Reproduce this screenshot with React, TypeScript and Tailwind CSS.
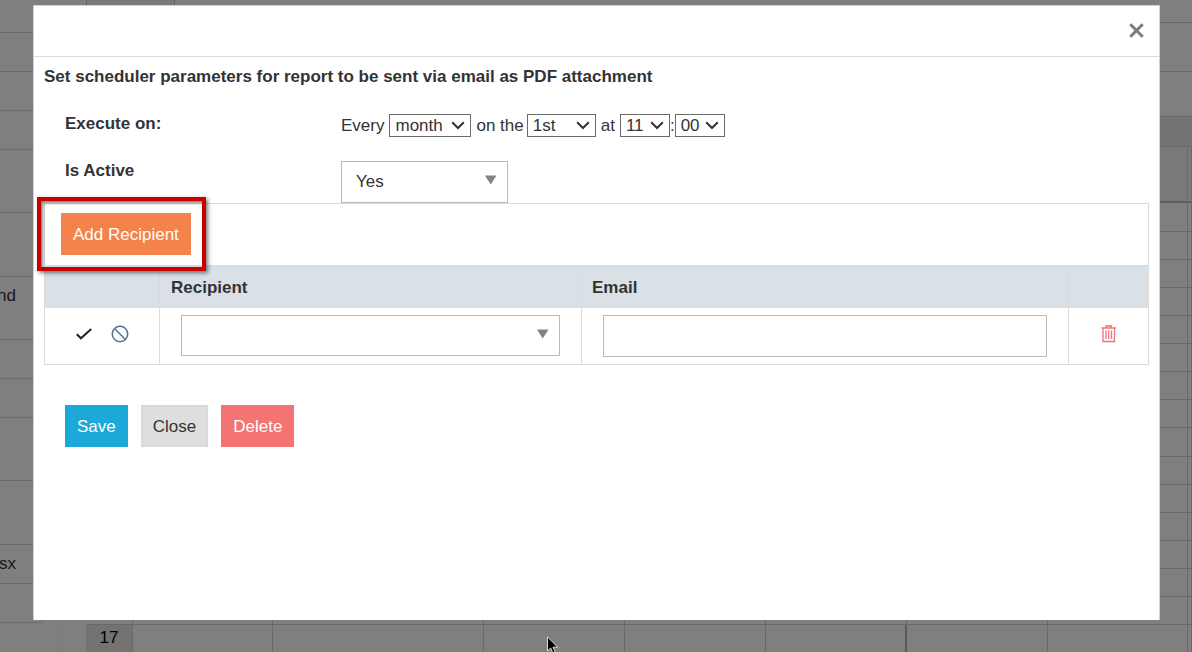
import React from "react";

const listRows: { size: string; text?: string }[] = [
  { size: "h-[33px]" },
  { size: "h-[39px]" },
  { size: "h-[39px]" },
  { size: "h-[39px]" },
  { size: "h-[63px]" },
  { size: "h-16" },
  { size: "h-[63px]", text: "nd" },
  { size: "h-[39px]" },
  { size: "h-[39px]" },
  { size: "h-[63px]" },
  { size: "h-16" },
  { size: "h-[39px]", text: "sx" },
  { size: "h-[39px]" },
];

const sheetColumns = [
  "w-[47px]",
  "w-[140px]",
  "w-[211px]",
  "w-[141px]",
  "w-[141px]",
  "w-[141px]",
  "w-[141px]",
  "w-[140px]",
  "w-auto",
];

const sheetRows = Array.from({ length: 15 }, (_, i) => i);

function Backdrop() {
  return (
    <div className="flex h-screen overflow-hidden bg-white text-[#333]">
      <ul className="w-[58px] shrink-0 border-r-2 border-[#fafafa] bg-white">
        {listRows.map((row, i) => (
          <li key={i} className={`${row.size} w-[42px] shrink-0 border-b border-[#d6d6d6]`}>
            {row.text && (
              <span className="flex w-4 justify-end pt-[7px] leading-6">{row.text}</span>
            )}
          </li>
        ))}
      </ul>
      <div className="flex min-w-0 grow flex-col pl-7">
        <div className="flex h-[23px] shrink-0 border-b border-[#d4d4d4]">
          <div className="w-[89px] border-x border-[#c4c4c4] bg-[#f2f2f2]" />
        </div>
        <div className="h-[49px] shrink-0 border-b border-[#d4d4d4]" />
        <div className="h-11 shrink-0" />
        <div className="h-[31px] shrink-0 border-y border-[#d4d4d4] bg-[#e8e8e8]" />
        <table className="w-full table-fixed border-separate border-spacing-0">
          <colgroup>
            {sheetColumns.map((w, i) => (
              <col key={i} className={w} />
            ))}
          </colgroup>
          <thead>
            <tr className="h-14 bg-[#f2f2f2]">
              {sheetColumns.map((_, i) => (
                <td key={i} className="border-r border-b-2 border-r-[#d4d4d4] border-b-[#bdbdbd] p-0" />
              ))}
            </tr>
          </thead>
          <tbody>
            {sheetRows.map((r) => (
              <tr key={r} className={r === 0 || r === 8 ? "h-[29px]" : "h-7"}>
                {sheetColumns.map((_, i) => (
                  <td key={i} className="border-r border-b border-[#d0d0d0] p-0" />
                ))}
              </tr>
            ))}
            <tr className="h-7">
              <th scope="row" className="border-r border-[#d0d0d0] bg-[#e6e6e6] p-0 pb-0.5 text-center font-normal leading-6 text-black">
                17
              </th>
              {sheetColumns.slice(1).map((_, i) => (
                <td
                  key={i}
                  className={
                    i === 4
                      ? "border-r-2 border-[#b4b4b4] p-0"
                      : "border-r border-[#d0d0d0] p-0"
                  }
                />
              ))}
            </tr>
          </tbody>
        </table>
      </div>
    </div>
  );
}

function SmallSelect({ label, options, width }: { label: string; options: string[]; width: string }) {
  return (
    <span className={`relative inline-flex ${width}`}>
      <select
        aria-label={label}
        className="h-[23px] w-full appearance-none border border-[#6b6b6b] bg-white pl-[5px] leading-5 text-[#333] outline-none"
      >
        {options.map((o) => (
          <option key={o}>{o}</option>
        ))}
      </select>
      <svg
        viewBox="0 0 14 9"
        className="pointer-events-none absolute top-[7px] right-[6px] h-[9px] w-3.5"
        fill="none"
        stroke="#333"
        strokeWidth="2"
      >
        <path d="M1.200 1.200 7 7l5.800-5.800" />
      </svg>
    </span>
  );
}

function WideSelect({ id, label, options, size }: { id: string; label?: string; options: string[]; size: string }) {
  return (
    <div className={`relative ${size}`}>
      <select
        id={id}
        aria-label={label}
        className="h-full w-full appearance-none border border-[#b9b9b9] bg-white pl-3.5 text-[#333] outline-none"
      >
        {options.map((o) => (
          <option key={o}>{o}</option>
        ))}
      </select>
      <svg viewBox="0 0 12 10" className="pointer-events-none absolute top-3.5 right-[11px] h-2.5 w-3" fill="#7f8487">
        <path d="M0 0.500h11.500L5.700 9.500z" />
      </svg>
    </div>
  );
}

export default function App() {
  return (
    <div className="relative min-h-screen overflow-hidden font-['Liberation_Sans',Arial,sans-serif] text-[17px] leading-6">
      <Backdrop />
      <div className="absolute inset-0 flex bg-black/50 pt-[5px] pr-8 pb-8 pl-[33px]">
        <section
          role="dialog"
          aria-label="Scheduler"
          className="flex min-w-0 grow flex-col border-x border-t border-[#d2d2d2] bg-white text-[#333]"
        >
          <header className="flex h-[51px] shrink-0 items-center justify-end border-b border-[#dadada] pr-[15px]">
            <button type="button" aria-label="Close dialog" className="flex pb-px">
              <svg viewBox="0 0 15 15" className="size-[15px]" fill="none" stroke="#7c7c7c" strokeWidth="3">
                <path d="M1.300 1.300 13.700 13.700M13.700 1.300 1.300 13.700" />
              </svg>
            </button>
          </header>
          <div className="px-2.5 pt-2">
            <h1 className="font-bold">
              Set scheduler parameters for report to be sent via email as PDF attachment
            </h1>
            <div className="mt-[23px] flex pl-[21px]">
              <div className="w-[276px] shrink-0 font-bold">Execute on:</div>
              <div className="flex items-start pt-0.5">
                <span className="mr-[5px]">Every</span>
                <SmallSelect label="Frequency" options={["month"]} width="w-[82px]" />
                <span className="mr-[3px] ml-[5px]">on the</span>
                <SmallSelect label="Day" options={["1st"]} width="w-[69px]" />
                <span className="mx-[5px]">at</span>
                <SmallSelect label="Hour" options={["11"]} width="w-[50px]" />
                <span>:</span>
                <SmallSelect label="Minute" options={["00"]} width="w-[50px]" />
              </div>
            </div>
            <div className="mt-[23px] flex pl-[21px]">
              <label htmlFor="active" className="w-[276px] shrink-0 -mt-0.5 font-bold">
                Is Active
              </label>
              <WideSelect id="active" options={["Yes"]} size="h-[42px] w-[167px]" />
            </div>

            <div className="relative flex h-[62px] items-start border-x border-t border-[#dadada] pt-[9px] pl-4">
              <button type="button" className="h-[42px] bg-[#f4824b] px-3 pt-0.5 text-white">
                Add Recipient
              </button>
              <div className="pointer-events-none absolute -top-[7px] -left-[8px] h-[74px] w-[169px] border-4 border-[#c80000] shadow-[2px_2px_4px_rgba(0,0,0,0.5),inset_2px_2px_3px_rgba(0,0,0,0.5)]" />
            </div>
            <table className="w-full table-fixed border-collapse">
              <colgroup>
                <col className="w-[115px]" />
                <col className="w-[422px]" />
                <col className="w-auto" />
                <col className="w-20" />
              </colgroup>
              <thead>
                <tr className="h-[42px] bg-[#d9e0e6] text-left">
                  <td className="border border-[#dadada]" />
                  <th className="border border-[#dadada] px-[11px] pt-0.5 pb-0">Recipient</th>
                  <th className="border border-[#dadada] px-2.5 pt-0.5 pb-0">Email</th>
                  <td className="border border-[#dadada]" />
                </tr>
              </thead>
              <tbody>
                <tr className="h-[57px]">
                  <td className="border border-[#dadada] p-0">
                    <div className="flex items-center gap-[19px] pb-1 pl-[31px]">
                      <button type="button" aria-label="Accept">
                        <svg viewBox="0 0 16 12" className="block h-3 w-4" fill="none" stroke="#222" strokeWidth="2">
                          <path d="M0.800 6.300 4.900 10.300 15.200 1" />
                        </svg>
                      </button>
                      <button type="button" aria-label="Cancel">
                        <svg viewBox="0 0 18 18" className="block size-[18px]" fill="none" stroke="#547391" strokeWidth="1.500">
                          <circle cx="9" cy="9" r="7.700" />
                          <path d="M3.500 3.500 14.500 14.500" />
                        </svg>
                      </button>
                    </div>
                  </td>
                  <td className="border border-[#dadada] px-[21px] pt-0 pb-0.5">
                    <WideSelect id="recipient" label="Recipient" options={[""]} size="h-[41px] w-full" />
                  </td>
                  <td className="border border-[#dadada] px-[21px] py-0">
                    <input
                      type="text"
                      aria-label="Email"
                      className="block h-[42px] w-full border border-[#b9b9b9] bg-white px-3 outline-none"
                    />
                  </td>
                  <td className="border border-[#dadada] p-0">
                    <div className="flex justify-center pb-1">
                      <button type="button" aria-label="Delete recipient">
                        <svg viewBox="0 0 16 18" className="block h-[18px] w-4" fill="none" stroke="#f47272" strokeWidth="1.300">
                          <path d="M0.500 3h14.500M2 3v13.500h11.500V3M5 2.800V1h5.500v1.800M5 5.500v8.500M7.750 5.500v8.500M10.500 5.500v8.500" />
                        </svg>
                      </button>
                    </div>
                  </td>
                </tr>
              </tbody>
            </table>

            <div className="mt-10 flex gap-[13px] pl-[21px]">
              <button type="button" className="h-[42px] bg-[#1ca8d9] px-3 pt-0.5 text-white">
                Save
              </button>
              <button type="button" className="h-[42px] border-2 border-[#d9d9d9] bg-[#dedede] px-2.5 pt-0.5 text-[#333]">
                Close
              </button>
              <button type="button" className="h-[42px] bg-[#f47373] px-3 pt-0.5 text-white">
                Delete
              </button>
            </div>
          </div>
        </section>
      </div>
      <svg viewBox="0 0 12 19" className="pointer-events-none absolute top-[636px] left-[547px] h-[19px] w-3" fill="#000" stroke="#fff" strokeWidth="0.800">
        <path d="M0.500 0.800v14.200l3.200-3 2.300 5.400 2.300-1-2.300-5.200h4.600z" />
      </svg>
    </div>
  );
}
